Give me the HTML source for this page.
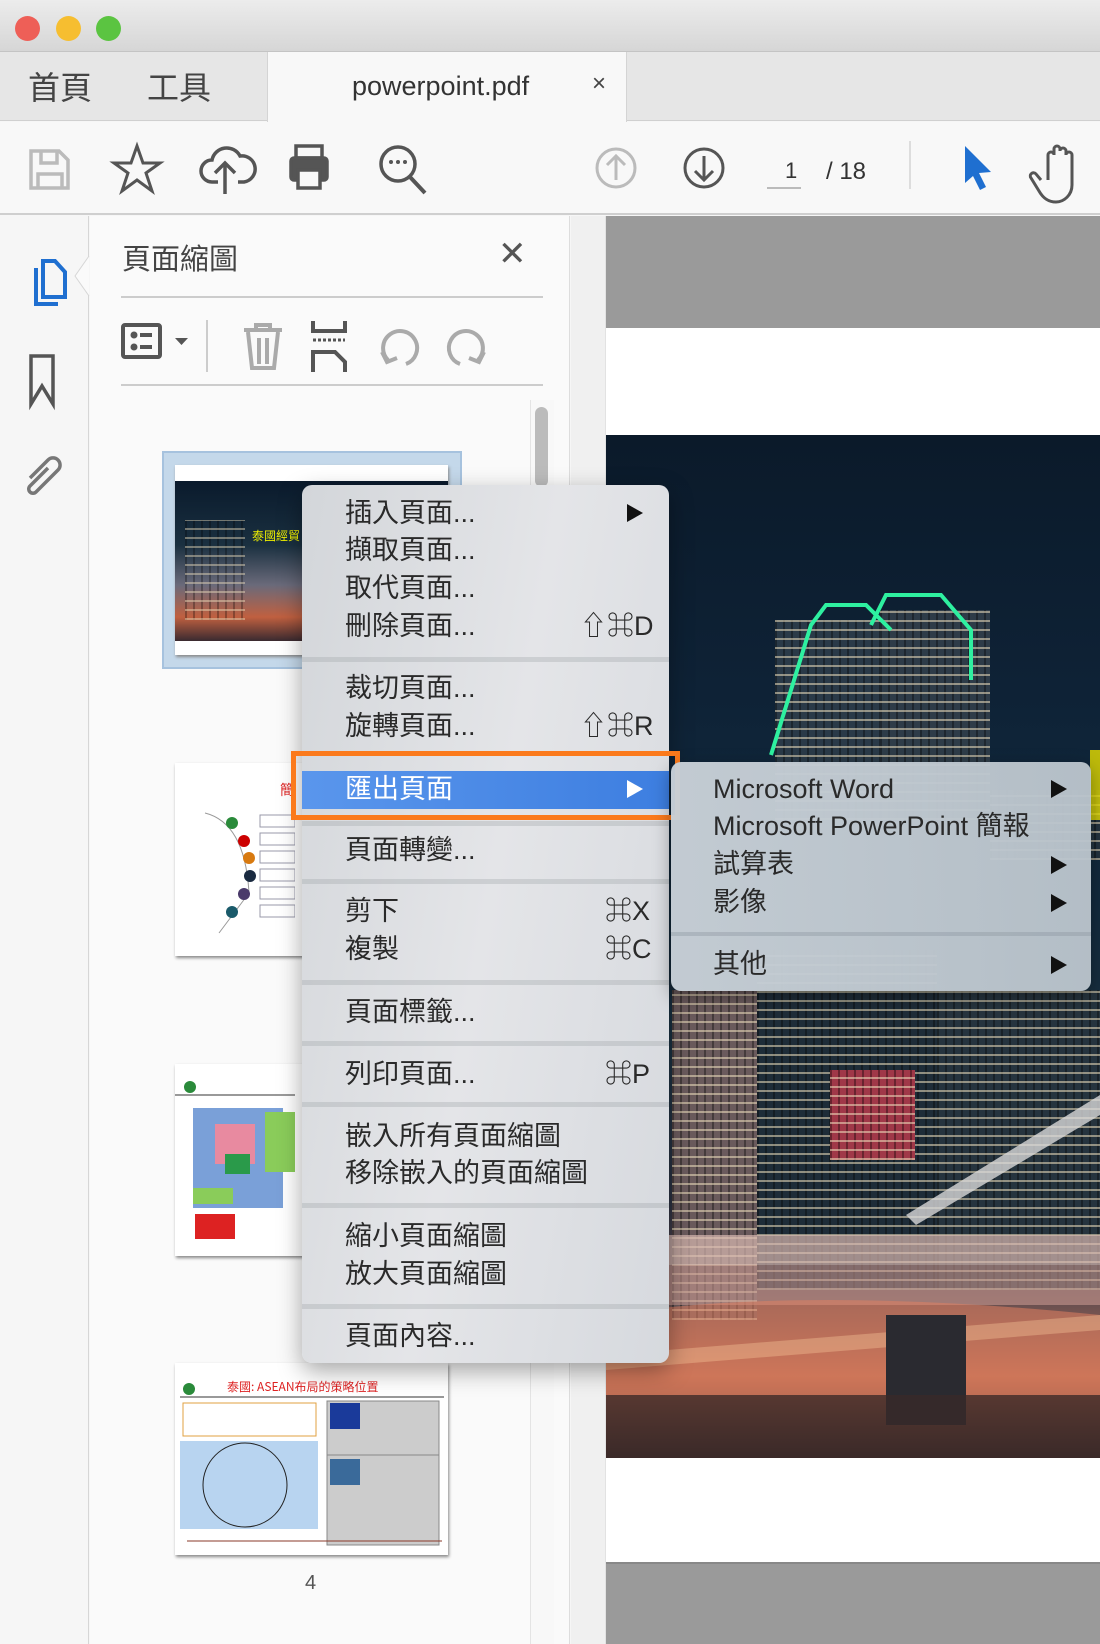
<!DOCTYPE html>
<html><head><meta charset="utf-8"><style>
*{margin:0;padding:0;box-sizing:border-box}
body{width:1100px;height:1644px;position:relative;overflow:hidden;background:#f6f6f6;font-family:"Liberation Sans","Noto Sans CJK TC",sans-serif;color:#333}
.a{position:absolute}
.mi{position:absolute;left:345px;font-size:27px;line-height:38px;color:#2a2a2a;white-space:nowrap;font-family:"Liberation Sans","Noto Sans CJK TC",sans-serif}
.ar{position:absolute;width:0;height:0;border-top:9px solid transparent;border-bottom:9px solid transparent;border-left:16px solid #111}
.sep{position:absolute;left:302px;width:367px;height:5px;background:rgba(160,165,170,.35)}
.sm{position:absolute;left:713px;font-size:27px;line-height:38px;color:#2a2a2a;white-space:nowrap}
.win{background-image:repeating-linear-gradient(0deg,rgba(240,225,190,.55) 0 2px,transparent 2px 9px),repeating-linear-gradient(90deg,rgba(0,0,0,.35) 0 2px,transparent 2px 8px)}
</style></head><body>
<div class="a" style="left:0;top:0;width:1100px;height:52px;background:linear-gradient(#ececec,#d6d6d6);border-bottom:1px solid #c4c4c4"></div>
<div class="a" style="left:15px;top:16px;width:25px;height:25px;border-radius:50%;background:#ee5f57"></div>
<div class="a" style="left:56px;top:16px;width:25px;height:25px;border-radius:50%;background:#f6be30"></div>
<div class="a" style="left:96px;top:16px;width:25px;height:25px;border-radius:50%;background:#5bc441"></div>
<div class="a" style="left:0;top:52px;width:1100px;height:69px;background:#e6e6e6;border-bottom:1px solid #d0d0d0"></div>
<div class="a" style="left:28px;top:63px;font-size:32px;color:#444">首頁</div>
<div class="a" style="left:147px;top:63px;font-size:32px;color:#444">工具</div>
<div class="a" style="left:267px;top:52px;width:360px;height:70px;background:#f8f8f8;border-left:1px solid #d4d4d4;border-right:1px solid #d4d4d4"></div>
<div class="a" style="left:352px;top:71px;font-size:27px;color:#333">powerpoint.pdf</div>
<div class="a" style="left:592px;top:70px;font-size:24px;color:#444">×</div>
<div class="a" style="left:0;top:122px;width:1100px;height:93px;background:#f8f8f8;border-bottom:2px solid #cfcfcf"></div>
<svg class="a" style="left:0;top:122px" width="1100" height="93" viewBox="0 0 1100 93">
<g fill="none" stroke-width="3.5">
<path d="M31 29h28l9 9v28H31z M41 29v12h16V29 M38 66V52h24v14" stroke="#bbb"/>
<path d="M137 24l6 17h17l-14 10 6 18-15-11-15 11 6-18-14-10h17z" stroke="#555" stroke-width="3"/>
<path d="M218 60h-6a11 11 0 0 1 0-22 15 15 0 0 1 28-4 12 12 0 0 1 4 26h-6 M225 72V42 M215 51l10-10 10 10" stroke="#555"/>
<rect x="296" y="24" width="26" height="12" stroke="#555"/><rect x="291" y="36" width="36" height="22" rx="3" fill="#555" stroke="#555"/><rect x="298" y="48" width="22" height="18" fill="#f8f8f8" stroke="#555"/>
<circle cx="398" cy="42" r="17" stroke="#555"/><path d="M410 55l15 16" stroke="#555" stroke-width="4"/>
<circle cx="616" cy="46" r="19" stroke="#bbb" stroke-width="3"/><path d="M616 58V34 M607 43l9-9 9 9" stroke="#bbb" stroke-width="3"/>
<circle cx="704" cy="46" r="19" stroke="#555" stroke-width="3"/><path d="M704 34v24 M695 49l9 9 9-9" stroke="#555" stroke-width="3"/>
<path d="M767 66h34" stroke="#bbb" stroke-width="2"/><path d="M910 19v48" stroke="#ddd" stroke-width="2"/>
<path d="M1048 58V33a3 3 0 0 1 6 0v-6a3 3 0 0 1 6 0v2a3 3 0 0 1 6 0v4a3 3 0 0 1 6 0v30c0 10-8 17-16 17s-13-4-17-11l-8-13a3 3 0 0 1 5-4l5 6" stroke="#555" stroke-width="3"/>
</g>
<circle cx="391" cy="40" r="2" fill="#555"/><circle cx="398" cy="40" r="2" fill="#555"/><circle cx="405" cy="40" r="2" fill="#555"/>
<path d="M965 24l26 26-12 1 7 14-6 3-7-14-8 7z" fill="#1f6fd0"/>
<text x="785" y="56" font-size="22" fill="#333" font-family="Liberation Sans">1</text>
<text x="826" y="57" font-size="24" fill="#333" font-family="Liberation Sans">/ 18</text>
</svg>
<div class="a" style="left:0;top:216px;width:89px;height:1428px;background:#f6f6f6;border-right:1px solid #d6d6d6"></div>
<svg class="a" style="left:0;top:216px" width="100" height="280">
<path d="M89 40l-14 20 14 20" fill="#fafafa" stroke="#d6d6d6" stroke-width="1"/>
<g fill="none" stroke="#1f6fd0" stroke-width="4"><path d="M36 52v36h22"/><path d="M43 45v36h22V56l-10-11z"/></g>
<path d="M31 140v48l11-18 11 18v-48z" fill="none" stroke="#555" stroke-width="3.5"/>
<path d="M30 262l18-18a7 7 0 0 1 10 10l-22 22a4 4 0 0 1-6-6l18-18" fill="none" stroke="#777" stroke-width="3.5"/>
</svg>
<div class="a" style="left:90px;top:216px;width:480px;height:1428px;background:#fafafa;border-right:1px solid #ddd"></div>
<div class="a" style="left:122px;top:236px;font-size:29px;color:#444">頁面縮圖</div>
<div class="a" style="left:498px;top:234px;font-size:34px;color:#555;font-family:'DejaVu Sans'">✕</div>
<div class="a" style="left:121px;top:296px;width:422px;height:2px;background:#ccc"></div>
<div class="a" style="left:121px;top:384px;width:422px;height:2px;background:#ccc"></div>
<svg class="a" style="left:110px;top:310px" width="380" height="70">
<rect x="13" y="15" width="37" height="32" rx="2" fill="none" stroke="#555" stroke-width="4"/>
<circle cx="24" cy="25" r="3.5" fill="#555"/><circle cx="24" cy="37" r="3.5" fill="#555"/><path d="M30 25h12M30 37h12" stroke="#555" stroke-width="4"/>
<path d="M65 28h13l-6.5 7z" fill="#555"/>
<path d="M97 10v52" stroke="#ccc" stroke-width="2"/>
<g stroke="#aaa" fill="none" stroke-width="4"><path d="M134 20h38M146 20v-5h14v5M138 22l4 36h22l4-36M149 28v26M157 28v26"/></g>
<g stroke="#555" fill="none" stroke-width="4"><path d="M203 11v10h32V11M203 62V42h22l10 10v10"/></g><path d="M203 30h32" stroke="#555" stroke-width="3" stroke-dasharray="3 2"/>
<g stroke="#aaa" fill="none" stroke-width="4"><path d="M278 50a17 17 0 1 1 18 4"/><path d="M272 42l5 10 10-4"/><path d="M368 50a17 17 0 1 0-18 4"/><path d="M374 42l-5 10-10-4"/></g>
</svg>
<div class="a" style="left:530px;top:400px;width:24px;height:1244px;border-left:1px solid #e4e4e4;background:#f8f8f8"></div>
<div class="a" style="left:535px;top:407px;width:13px;height:80px;border-radius:7px;background:#bbb"></div>
<div class="a" style="left:162px;top:451px;width:300px;height:218px;background:#c4d8ea;border:2px solid #a6c2de"></div>
<div class="a" style="left:175px;top:465px;width:273px;height:190px;background:#fff;box-shadow:1px 2px 3px #888"></div>
<div class="a" style="left:175px;top:481px;width:273px;height:160px;background:linear-gradient(180deg,#0a1a2c 0%,#1a3040 40%,#6a6a7a 65%,#c06040 85%,#3a2a30 100%)"></div>
<div class="a win" style="left:185px;top:520px;width:60px;height:100px;opacity:.8"></div>
<div class="a" style="left:252px;top:527px;font-size:12px;color:#ee0">泰國經貿</div>
<div class="a" style="left:175px;top:763px;width:273px;height:193px;background:#fff;box-shadow:1px 2px 3px #888"></div>
<svg class="a" style="left:175px;top:763px" width="120" height="193"><text x="105" y="32" font-size="14" fill="#d22">簡</text><path d="M30 50q40 10 44 80l-30 40" fill="none" stroke="#999"/><circle cx="57" cy="60" r="6" fill="#2a8a3a"/><circle cx="69" cy="78" r="6" fill="#c00"/><circle cx="74" cy="95" r="6" fill="#d87a10"/><circle cx="75" cy="113" r="6" fill="#1a2a40"/><circle cx="69" cy="131" r="6" fill="#4a3a6a"/><circle cx="57" cy="149" r="6" fill="#1a5a6a"/><g fill="#fff" stroke="#99a"><rect x="85" y="52" width="35" height="12"/><rect x="85" y="70" width="35" height="12"/><rect x="85" y="88" width="35" height="12"/><rect x="85" y="106" width="35" height="12"/><rect x="85" y="124" width="35" height="12"/><rect x="85" y="142" width="35" height="12"/></g></svg>
<div class="a" style="left:175px;top:1064px;width:273px;height:192px;background:#fff;box-shadow:1px 2px 3px #888"></div>
<svg class="a" style="left:175px;top:1064px" width="120" height="192"><circle cx="15" cy="23" r="6" fill="#2a8a3a"/><path d="M0 31h120" stroke="#333"/><rect x="18" y="44" width="90" height="100" fill="#7aa0d8"/><rect x="40" y="60" width="40" height="40" fill="#e88aa0"/><rect x="50" y="90" width="25" height="20" fill="#2a9a4a"/><rect x="18" y="124" width="40" height="16" fill="#8acc5a"/><path d="M90 48h30v60H90z" fill="#8acc5a"/><rect x="20" y="150" width="40" height="25" fill="#d22"/></svg>
<div class="a" style="left:175px;top:1363px;width:273px;height:192px;background:#fff;box-shadow:1px 2px 3px #888"></div>
<svg class="a" style="left:175px;top:1363px" width="273" height="192"><circle cx="14" cy="26" r="6" fill="#2a8a3a"/><text x="52" y="28" font-size="12" fill="#d22" font-family="Noto Sans CJK TC">泰國: ASEAN布局的策略位置</text><path d="M5 34h264" stroke="#333"/><rect x="8" y="40" width="133" height="33" fill="none" stroke="#e0a040"/><rect x="5" y="78" width="138" height="88" fill="#b8d4f0"/><circle cx="70" cy="122" r="42" fill="none" stroke="#222"/><rect x="152" y="38" width="112" height="92" fill="#ccc" stroke="#888"/><rect x="152" y="92" width="112" height="90" fill="#ccc" stroke="#888"/><rect x="155" y="40" width="30" height="26" fill="#1a3a9a"/><rect x="155" y="96" width="30" height="26" fill="#3a6a9a"/><path d="M12 178h255" stroke="#8a3a2a"/></svg>
<div class="a" style="left:305px;top:1572px;font-size:20px;color:#555">4</div>
<div class="a" style="left:571px;top:216px;width:35px;height:1428px;background:#f0f0f0;border-right:1px solid #e2e2e2"></div>
<div class="a" style="left:606px;top:216px;width:494px;height:112px;background:#9a9a9a"></div>
<div class="a" style="left:606px;top:328px;width:494px;height:1234px;background:#fff"></div>
<div class="a" style="left:606px;top:1562px;width:494px;height:82px;background:#9a9a9a;border-top:2px solid #888"></div>
<div class="a" style="left:606px;top:435px;width:494px;height:1023px;background:linear-gradient(180deg,#0b1a2a 0%,#0e2236 25%,#122a3e 45%,#1a3040 60%,#2a3040 75%,#6a5050 85%,#b86a50 92%,#3a2a2a 100%)"></div>
<!-- buildings -->
<div class="a win" style="left:775px;top:620px;width:120px;height:200px;background-color:#2a3a48"></div>
<div class="a win" style="left:880px;top:610px;width:110px;height:210px;background-color:#2e3c48"></div>
<div class="a win" style="left:990px;top:790px;width:110px;height:70px;background-color:#243440"></div>
<div class="a win" style="left:672px;top:990px;width:85px;height:330px;background-color:#6a5a5c"></div>
<div class="a win" style="left:757px;top:950px;width:180px;height:340px;background-color:#1e2c38"></div>
<div class="a win" style="left:937px;top:990px;width:163px;height:300px;background-color:#26343e"></div>
<div class="a win" style="left:830px;top:1070px;width:85px;height:90px;background-color:#a03848"></div>
<svg class="a" style="left:606px;top:435px" width="494" height="1023">
<path d="M165 320l40-130 15-20h40l25 25" fill="none" stroke="#2ef0a0" stroke-width="4"/>
<path d="M265 190l15-30h55l30 35v50" fill="none" stroke="#2ef0a0" stroke-width="4"/>
<path d="M300 780l194-120v20L310 790z" fill="#d8d8d8" opacity=".8"/>
<path d="M60 800h434v30H60z" fill="#d8b8b0" opacity=".7"/>
<path d="M60 830h434v40H60z" fill="#c89890" opacity=".6"/>
<path d="M0 880q200-30 494 0v80H0z" fill="#e08060" opacity=".55"/>
<path d="M0 920l494-40v15L0 935z" fill="#ffd0a0" opacity=".35"/>
<rect x="280" y="880" width="80" height="110" fill="#2a2a30"/>
<rect x="0" y="960" width="494" height="63" fill="#3a2a28" opacity=".7"/>
</svg>
<div class="a" style="left:1090px;top:750px;width:10px;height:70px;background:#e8e000;opacity:.8"></div>
<div class="a" style="left:302px;top:485px;width:367px;height:878px;border-radius:10px;background:linear-gradient(100deg,#d3d6da 0%,#e4e5e8 50%,#d6d9de 100%);box-shadow:0 8px 24px rgba(0,0,0,.35)"></div>
<div class="sep" style="top:657px"></div>
<div class="sep" style="top:821px"></div>
<div class="sep" style="top:879px"></div>
<div class="sep" style="top:980px"></div>
<div class="sep" style="top:1041px"></div>
<div class="sep" style="top:1102px"></div>
<div class="sep" style="top:1203px"></div>
<div class="sep" style="top:1304px"></div>
<div class="a" style="left:302px;top:771px;width:367px;height:38px;background:linear-gradient(90deg,#5a96ec,#3d7ee0)"></div>
<div class="a" style="left:291px;top:751px;width:389px;height:69px;border:5px solid #fb7a1c"></div>
<div class="mi" style="top:494px">插入頁面...</div><div class="ar" style="left:627px;top:504px"></div>
<div class="mi" style="top:531px">擷取頁面...</div>
<div class="mi" style="top:569px">取代頁面...</div>
<div class="mi" style="top:607px">刪除頁面...</div><div class="mi" style="left:580px;top:607px">⇧⌘D</div>
<div class="mi" style="top:669px">裁切頁面...</div>
<div class="mi" style="top:707px">旋轉頁面...</div><div class="mi" style="left:580px;top:707px">⇧⌘R</div>
<div class="mi" style="top:770px;color:#fff">匯出頁面</div><div class="ar" style="left:627px;top:780px;border-left-color:#fff"></div>
<div class="mi" style="top:831px">頁面轉變...</div>
<div class="mi" style="top:892px">剪下</div><div class="mi" style="left:605px;top:892px">⌘X</div>
<div class="mi" style="top:930px">複製</div><div class="mi" style="left:605px;top:930px">⌘C</div>
<div class="mi" style="top:993px">頁面標籤...</div>
<div class="mi" style="top:1055px">列印頁面...</div><div class="mi" style="left:605px;top:1055px">⌘P</div>
<div class="mi" style="top:1117px">嵌入所有頁面縮圖</div>
<div class="mi" style="top:1154px">移除嵌入的頁面縮圖</div>
<div class="mi" style="top:1217px">縮小頁面縮圖</div>
<div class="mi" style="top:1255px">放大頁面縮圖</div>
<div class="mi" style="top:1317px">頁面內容...</div>
<div class="a" style="left:671px;top:762px;width:420px;height:229px;border-radius:10px;background:linear-gradient(90deg,rgba(200,208,215,.97),rgba(186,196,204,.96));box-shadow:0 6px 18px rgba(0,0,0,.35)"></div>
<div class="a" style="left:671px;top:932px;width:420px;height:4px;background:rgba(140,150,160,.4)"></div>
<div class="sm" style="top:770px">Microsoft Word</div><div class="ar" style="left:1051px;top:780px"></div>
<div class="sm" style="top:807px">Microsoft PowerPoint 簡報</div>
<div class="sm" style="top:845px">試算表</div><div class="ar" style="left:1051px;top:856px"></div>
<div class="sm" style="top:883px">影像</div><div class="ar" style="left:1051px;top:894px"></div>
<div class="sm" style="top:945px">其他</div><div class="ar" style="left:1051px;top:956px"></div>
</body></html>
